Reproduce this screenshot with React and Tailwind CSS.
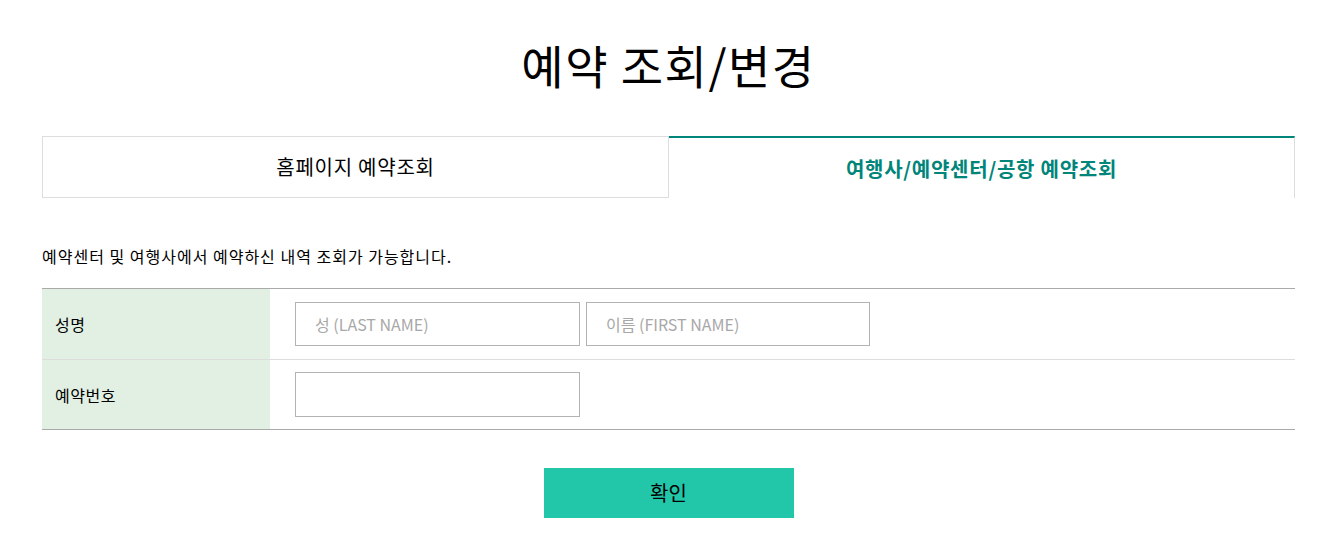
import { useState } from 'react';

const font = "font-['Noto_Sans_CJK_KR','Noto_Sans',sans-serif]";

export default function App() {
  const [tab, setTab] = useState(1);
  const [lastName, setLastName] = useState('');
  const [firstName, setFirstName] = useState('');
  const [bookingNo, setBookingNo] = useState('');

  const tabs = ['홈페이지 예약조회', '여행사/예약센터/공항 예약조회'];

  return (
    <div className={`${font} min-h-[553px] bg-white text-black`}>
      <div className="ml-[42px] w-[1253px] pt-[33px]">
        <h1 className="text-center text-[46px] leading-[62px] font-normal tracking-[1.5px]">예약 조회/변경</h1>

        <div className="mt-[41px] flex">
          {tabs.map((label, i) => {
            const active = tab === i;
            return (
              <button
                key={label}
                type="button"
                onClick={() => setTab(i)}
                className={
                  active
                    ? 'flex h-[62px] flex-1 items-center justify-center border-t-2 border-r border-t-[#00857a] border-r-[#dddddd] pt-[2px] text-[20px] font-bold tracking-[0.75px] text-[#00857a]'
                    : 'flex h-[62px] flex-1 items-center justify-center border border-[#dddddd] text-[20px] tracking-[0.75px] text-black'
                }
              >
                {label}
              </button>
            );
          })}
        </div>

        <p className="mt-[46px] text-[16px] leading-[24px] tracking-[1px]">예약센터 및 여행사에서 예약하신 내역 조회가 가능합니다.</p>

        <div className="mt-[20px] border-t border-b border-[#aaaaaa]">
          <div className="flex h-[71px] border-b border-[#dddddd]">
            <div className="flex w-[228px] items-center bg-[#e2f0e3] pl-[13px] text-[16px] tracking-[0.5px]">성명</div>
            <div className="flex items-center gap-[6px] pl-[25px]">
              <input
                value={lastName}
                onChange={(e) => setLastName(e.target.value)}
                placeholder="성 (LAST NAME)"
                className="h-[44px] w-[285px] border border-[#b3b3b3] px-[19px] text-[16px] outline-none placeholder:text-[#a8a8a8]"
              />
              <input
                value={firstName}
                onChange={(e) => setFirstName(e.target.value)}
                placeholder="이름 (FIRST NAME)"
                className="h-[44px] w-[284px] border border-[#b3b3b3] px-[19px] text-[16px] outline-none placeholder:text-[#a8a8a8]"
              />
            </div>
          </div>
          <div className="flex h-[69px]">
            <div className="flex w-[228px] items-center bg-[#e2f0e3] pl-[13px] text-[16px] tracking-[0.5px]">예약번호</div>
            <div className="flex items-center pl-[25px]">
              <input
                value={bookingNo}
                onChange={(e) => setBookingNo(e.target.value)}
                className="h-[45px] w-[285px] border border-[#b3b3b3] px-[19px] text-[16px] outline-none"
              />
            </div>
          </div>
        </div>

        <div className="mt-[38px] flex justify-center">
          <button type="button" className="h-[50px] w-[250px] bg-[#22c6a9] text-[20px] text-black">
            확인
          </button>
        </div>
      </div>
    </div>
  );
}
